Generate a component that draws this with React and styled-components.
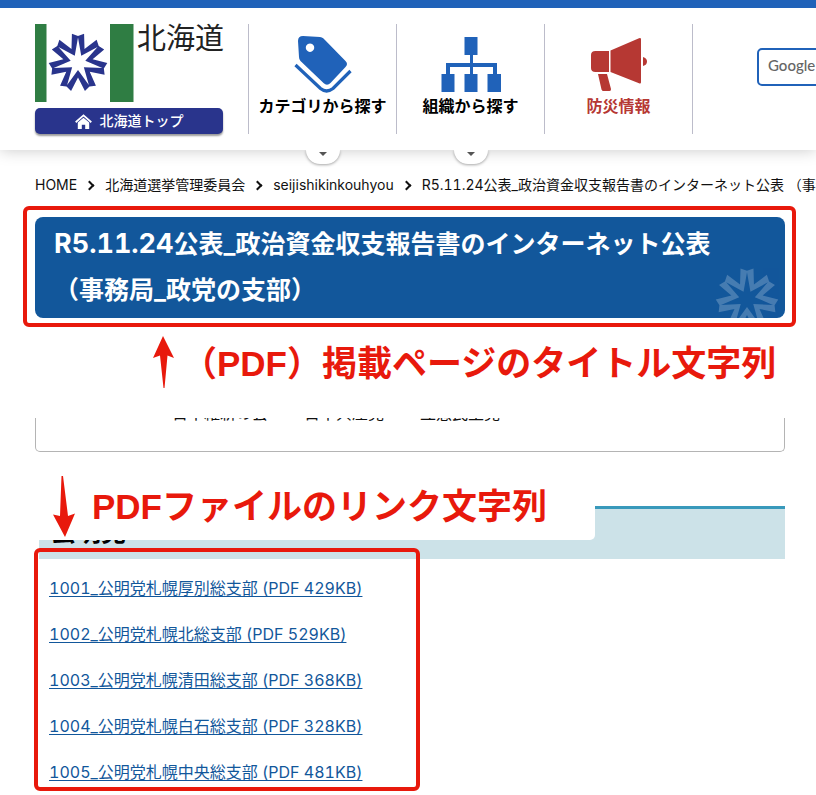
import React from 'react';
import styled, { createGlobalStyle } from 'styled-components';

const azul = '#2062b9';
const rojo = '#e8190c';
const fuente = 'Inter, "Noto Sans CJK JP", sans-serif';

const GlobalStyle = createGlobalStyle`
    * { box-sizing:border-box; }
    body {
        margin:0;
        background:white;
        color:#111;
        font-family:${fuente};
        font-size:14px;
        font-variant-numeric:tabular-nums;
    }
    a { color:inherit; text-decoration:none; }
    svg { display:block; flex:none; }
`

// Header
const Header = styled.header`
    position:relative;
    display:flex;
    align-items:flex-start;
    border-top:8px solid ${azul};
    padding:16px 0 16px 35px;
    background:white;
    box-shadow:0 0 15px rgba(0,0,0,0.22);
`

const Marca = styled.div`
    flex:none;
    width:188px;
    margin-right:25px;
`

const Logo = styled.a`
    display:flex;
    align-items:flex-start;
    gap:3px;
    margin-bottom:6px;
    color:#222;
    font-size:29px;
    line-height:30px;
    white-space:nowrap;
`

const BotonTop = styled.a`
    display:flex;
    align-items:center;
    justify-content:center;
    gap:8px;
    height:26px;
    border-radius:5px;
    background:#29348c;
    box-shadow:0 2px 2px rgba(0,0,0,0.4);
    color:white;
    line-height:24px;
    font-weight:500;
`

const Nav = styled.nav`
    display:flex;
    flex:none;
    border-left:1px solid #bcbcca;
`

const NavItem = styled.a`
    position:relative;
    display:flex;
    flex-direction:column;
    align-items:center;
    width:148px;
    height:110px;
    padding-top:10px;
    border-right:1px solid #bcbcca;
    color:${props=>props.$color || '#000'};
    font-size:16px;
    font-weight:700;
    line-height:24px;
`

const Pestana = styled.span`
    position:absolute;
    top:126px;
    left:57px;
    display:flex;
    justify-content:center;
    width:34px;
    height:14px;
    padding-top:2px;
    border-radius:0 0 17px 17px;
    background:white;
    box-shadow:0 1px 3px rgba(0,0,0,0.35);
    clip-path:inset(0 -6px -6px -6px);
`

const Buscar = styled.form`
    flex:1;
    min-width:0;
    margin:24px 0 0 64px;
    overflow:hidden;
`

const BuscarTexto = styled.input`
    display:block;
    width:240px;
    height:38px;
    padding:0 9px 4px;
    border:2px solid ${azul};
    border-radius:5px;
    background:white;
    font-family:Lato, sans-serif;
    font-size:15px;
    font-weight:500;
    &::placeholder { color:#666; opacity:1; }
`

// Breadcrumb
const Migas = styled.ol`
    display:flex;
    align-items:center;
    margin:0;
    padding:23px 0 9px 35px;
    overflow:hidden;
    list-style:none;
    line-height:24px;
    white-space:nowrap;
`

const Miga = styled.li`
    display:flex;
    align-items:center;
    &:not(:first-child)::before {
        content:'';
        width:5px;
        height:5px;
        margin:0 12px 0 9px;
        border-top:2px solid #111;
        border-right:2px solid #111;
        transform:rotate(45deg);
    }
`

// Title
const Marco = styled.div`
    margin:0 20px 0 23px;
    padding:7px 7px 5px 8px;
    border:4px solid ${rojo};
    border-radius:6px;
`

const Titulo = styled.h1`
    position:relative;
    margin:0;
    padding:4px 60px 5px 19px;
    border-radius:8px;
    overflow:hidden;
    background:#12579b;
    color:white;
    font-size:25px;
    line-height:46px;
`

const Fecha = styled.span`
    font-size:27px;
    line-height:1;
`

const MarcaAgua = styled.div`
    position:absolute;
    right:6px;
    bottom:-13px;
    opacity:0.22;
`

const Nota = styled.p`
    display:flex;
    margin:0;
    color:${rojo};
    font-family:"Liberation Sans", "Noto Sans CJK JP", sans-serif;
    font-size:35px;
    font-weight:700;
    line-height:56px;
    white-space:nowrap;
`

const NotaTitulo = styled(Nota)`
    align-items:flex-start;
    gap:7px;
    padding:9px 0 26px 153px;
`

const Contenido = styled.main`
    padding:0 31px 0 35px;
`

// Index of parties, only its last rows are in view
const Indice = styled.ul`
    display:flex;
    gap:36px;
    height:34px;
    margin:0 0 54px;
    padding:0 0 0 136px;
    border:1px solid #b4b4b4;
    border-top:0;
    border-radius:0 0 5px 5px;
    overflow:hidden;
    list-style:none;
    font-size:16px;
    line-height:24px;
    li { margin-top:-17px; }
`

const Seccion = styled.section`
    position:relative;
`

const Subtitulo = styled.h2`
    height:53px;
    margin:0 0 0 4px;
    padding:4px 12px;
    border-top:3px solid #3899bb;
    background:#cce2e8;
    color:#000;
    font-size:25px;
    line-height:38px;
`

const NotaEnlaces = styled(Nota)`
    position:absolute;
    top:-34px;
    left:0;
    width:560px;
    height:68px;
    align-items:center;
    gap:17px;
    padding:2px 0 0 18px;
    border-radius:0 0 5px 0;
    background:white;
`

const Lista = styled.ul`
    position:relative;
    display:flex;
    flex-direction:column;
    gap:22px;
    width:386px;
    margin:-11px 0 0 -1px;
    padding:24px 0 3px 11px;
    border:4px solid ${rojo};
    border-radius:6px;
    list-style:none;
    font-size:16px;
    line-height:24px;
`

const Enlace = styled.a`
    color:#12579b;
    text-decoration:underline;
    text-underline-offset:2px;
    text-decoration-skip-ink:none;
`

const brazos = [0,1,2,3,4,5,6];

// Seven pointed star: outer ring minus the inner star
const punto = (r, grados)=>{
    const a = grados * Math.PI / 180;
    return (r * Math.sin(a)).toFixed(2) + ' ' + (-r * Math.cos(a)).toFixed(2);
}
const fuera = brazos.map(i=>{
    const g = i * 360 / 7;
    return [punto(29.3, g - 12), punto(26.5, g), punto(29.3, g + 12), punto(15, g + 180 / 7)].join(' L');
}).join(' L');
const dentro = brazos.map(i=>{
    const g = i * 360 / 7;
    return [punto(25, g), punto(7.5, g + 180 / 7)].join(' L');
}).join(' L');

const Estrella = ({size, color})=>(
    <svg width={size} height={size} viewBox="-30 -30 60 60">
        <path fill={color} fillRule="evenodd" d={`M${fuera}Z M${dentro}Z`} />
    </svg>
)

const Bandera = ()=>(
    <svg width="99" height="78" viewBox="0 0 99 78">
        <path fill="#2f7d43" d="M0 0h11.5v78H0zM75 0h23.5v78H75z" />
        <g transform="translate(43 38.500)">
            <path fill="#29348c" fillRule="evenodd" d={`M${fuera}Z M${dentro}Z`} />
        </g>
    </svg>
)

const Casa = ()=>(
    <svg width="17" height="15" viewBox="0 0 17 15">
        <path fill="none" stroke="#fff" strokeWidth="1.8" d="M.7 8.2 8.5 1.4l7.8 6.8" />
        <path fill="#fff" d="M2.8 8.6 8.5 3.7l5.7 4.9V15h-4v-4.300H6.800V15h-4z" />
    </svg>
)

const Etiqueta = ()=>(
    <svg width="60" height="60" viewBox="0 0 60 60">
        <path fill={azul} fillRule="evenodd" d="M10 2 L27 3 Q29 3 30.500 4.500 L52.500 27 Q55.500 30 52.500 33 L37.500 49 Q34 52.500 30.500 49 L7.500 27 Q6 25.500 6 23 L5 7 Q5 2 10 2Z M17 9.500a4.200 4.200 0 1 0 .01 0Z" />
        <path fill="none" stroke={azul} strokeWidth="3.200" d="M2.500 31 27.500 54.500Q33.500 59.500 40 54.500L57.500 37" />
    </svg>
)

const Organigrama = ()=>(
    <svg width="60" height="60" viewBox="0 0 60 60">
        <path fill={azul} d="M23.500 3h13v18H32v8h24v11h4v18H46.500V40H52v-7H32v7h4.500v18h-13V40H29v-7H9v7h4.500v18H.500V40H5V29h24v-8h-5.500z" />
    </svg>
)

const Megafono = ()=>(
    <svg width="60" height="60" viewBox="0 0 60 60">
        <path fill="#b63833" d="M6.500 17H20v21H6.500q-4.500 0-4.500-4V21q0-4 4.500-4zM21.500 16.500 50 4.200q2-.7 2 1v43q0 2-2 1.100L21.500 38zM54 23q4 1 4 4.500T54 32zM9 40h9l4 15q.300 2-1.500 2h-6q-1.500 0-2-1.500z" />
    </svg>
)

const Triangulo = ()=>(
    <svg width="8" height="4" viewBox="0 0 8 4">
        <path fill="#555" d="M0 0h8L4 4z" />
    </svg>
)

const FlechaArriba = ()=>(
    <svg width="22" height="52" viewBox="0 0 22 52">
        <path fill={rojo} d="M10 0 21 22l-6.500-2.500L11.500 52h-1L7 19.500 0 22z" />
    </svg>
)

const FlechaAbajo = ()=>(
    <svg width="22" height="62" viewBox="0 0 22 62">
        <path fill={rojo} d="M8.500 0h1.500L15 40l7-2.500L12 61 0 38.500l7 1.500z" />
    </svg>
)

const migas = [
    'HOME',
    '北海道選挙管理委員会',
    'seijishikinkouhyou',
    'R5.11.24公表_政治資金収支報告書のインターネット公表 （事務局_政党の支部）',
];

const documentos = [
    '1001_公明党札幌厚別総支部 (PDF 429KB)',
    '1002_公明党札幌北総支部 (PDF 529KB)',
    '1003_公明党札幌清田総支部 (PDF 368KB)',
    '1004_公明党札幌白石総支部 (PDF 328KB)',
    '1005_公明党札幌中央総支部 (PDF 481KB)',
];

export default ()=>{
    return(
        <div lang="ja">
            <GlobalStyle />
            <Header>
                <Marca>
                    <Logo href="#"><Bandera />北海道</Logo>
                    <BotonTop href="#"><Casa />北海道トップ</BotonTop>
                </Marca>
                <Nav>
                    <NavItem href="#">
                        <Etiqueta />カテゴリから探す
                        <Pestana><Triangulo /></Pestana>
                    </NavItem>
                    <NavItem href="#">
                        <Organigrama />組織から探す
                        <Pestana><Triangulo /></Pestana>
                    </NavItem>
                    <NavItem href="#" $color="#b63833">
                        <Megafono />防災情報
                    </NavItem>
                </Nav>
                <Buscar>
                    <BuscarTexto type="search" placeholder="Google" aria-label="Google" />
                </Buscar>
            </Header>
            <Migas>
                {migas.map(miga=><Miga key={miga}>{miga}</Miga>)}
            </Migas>
            <Marco>
                <Titulo>
                    <Fecha>R5.11.24</Fecha>公表_政治資金収支報告書のインターネット公表<br />（事務局_政党の支部）
                    <MarcaAgua><Estrella size={64} color="#fff" /></MarcaAgua>
                </Titulo>
            </Marco>
            <NotaTitulo><FlechaArriba />（PDF）掲載ページのタイトル文字列</NotaTitulo>
            <Contenido>
                <Indice>
                    <li>日本維新の会</li>
                    <li>日本共産党</li>
                    <li>立憲民主党</li>
                </Indice>
                <Seccion>
                    <Subtitulo>公明党</Subtitulo>
                    <NotaEnlaces><FlechaAbajo />PDFファイルのリンク文字列</NotaEnlaces>
                    <Lista>
                        {documentos.map(doc=>(
                            <li key={doc}><Enlace href="#">{doc}</Enlace></li>
                        ))}
                    </Lista>
                </Seccion>
            </Contenido>
        </div>
    )
}
